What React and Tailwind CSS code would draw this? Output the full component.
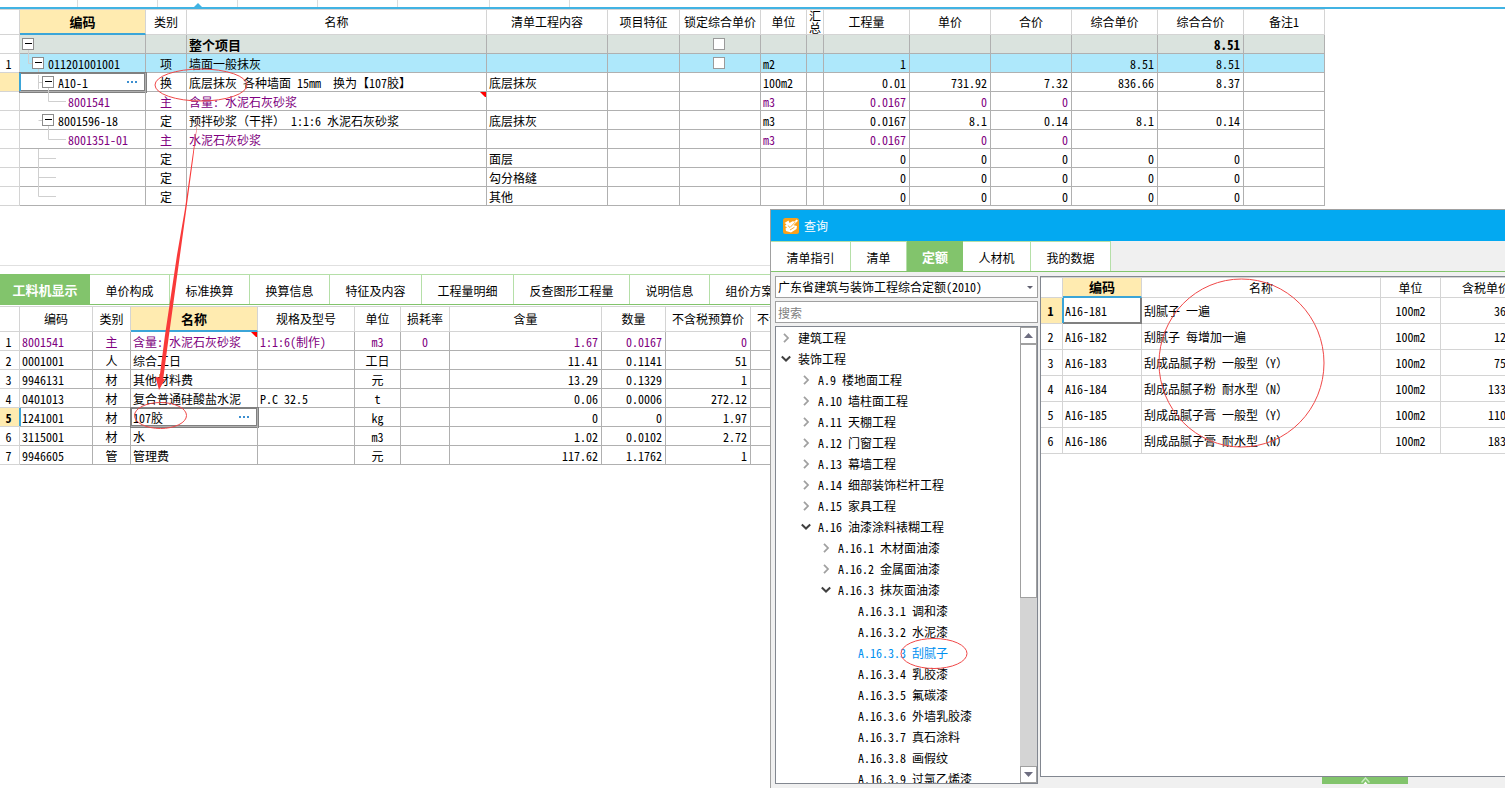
import React from "react";

const FONT = "font-['Noto_Sans_Mono_CJK_SC','Noto_Sans_CJK_SC','Liberation_Mono',monospace]";

const A_COLS = [
  ["", "w-[20px]"], ["编码", "w-[126px]"], ["类别", "w-[41px]"], ["名称", "w-[300px]"],
  ["清单工程内容", "w-[121px]"], ["项目特征", "w-[72px]"], ["锁定综合单价", "w-[81px]"],
  ["单位", "w-[46px]"], ["汇总", "w-[17px]"], ["工程量", "w-[86px]"], ["单价", "w-[81px]"],
  ["合价", "w-[81px]"], ["综合单价", "w-[86px]"], ["综合合价", "w-[86px]"], ["备注1", "w-[81px]"],
];

const A_ROWS = [
  { tree: "root", kind: "", name: "整个项目", check: true, tone: "summary", v: ["", "", "", "", "8.51"] },
  { no: "1", tree: "l1", code: "011201001001", kind: "项", name: "墙面一般抹灰", check: true, tone: "item", unit: "m2", v: ["1", "", "", "8.51", "8.51"] },
  { tree: "l2", code: "A10-1", kind: "换", name: "底层抹灰 各种墙面 15mm  换为【107胶】", content: "底层抹灰", unit: "100m2", v: ["0.01", "731.92", "7.32", "836.66", "8.37"], selected: true },
  { tree: "l3", code: "8001541", kind: "主", name: "含量: 水泥石灰砂浆", unit: "m3", v: ["0.0167", "0", "0", "", ""], tone: "main", flag: true },
  { tree: "l2b", code: "8001596-18", kind: "定", name: "预拌砂浆（干拌） 1:1:6 水泥石灰砂浆", content: "底层抹灰", unit: "m3", v: ["0.0167", "8.1", "0.14", "8.1", "0.14"] },
  { tree: "l3", code: "8001351-01", kind: "主", name: "水泥石灰砂浆", unit: "m3", v: ["0.0167", "0", "0", "", ""], tone: "main" },
  { tree: "mid", kind: "定", content: "面层", v: ["0", "0", "0", "0", "0"] },
  { tree: "mid", kind: "定", content: "勾分格缝", v: ["0", "0", "0", "0", "0"] },
  { tree: "end", kind: "定", content: "其他", v: ["0", "0", "0", "0", "0"] },
];

const BRANCH = {
  root: { d: "M8.5 15V19", box: 2, pad: "pl-[18px]" },
  l1: { d: "M8.5 0V9.5H12M18.5 15V19", box: 12, pad: "pl-[28px]" },
  l2: { d: "M18.5 2V16M18.5 9.5H22M28.5 15V19", box: 22, pad: "pl-[38px]" },
  l2b: { d: "M18.5 9.5H22M28.5 15V19", box: 22, pad: "pl-[38px]" },
  l3: { d: "M28.5 0V9.5H46", pad: "pl-[48px]" },
  mid: { d: "M18.5 0V19M18.5 9.5H36", pad: "" },
  end: { d: "M18.5 0V9.5H36", pad: "" },
};

const B_COLS = [
  ["", "w-[20px]"], ["编码", "w-[73px]"], ["类别", "w-[38px]"], ["名称", "w-[127px]"],
  ["规格及型号", "w-[97px]"], ["单位", "w-[46px]"], ["损耗率", "w-[49px]"], ["含量", "w-[152px]"],
  ["数量", "w-[64px]"], ["不含税预算价", "w-[85px]"], ["不含税市场价", "w-[85px]"],
];

const B_ROWS = [
  ["8001541", "主", "含量: 水泥石灰砂浆", "1:1:6(制作)", "m3", "0", "1.67", "0.0167", "0"],
  ["0001001", "人", "综合工日", "", "工日", "", "11.41", "0.1141", "51"],
  ["9946131", "材", "其他材料费", "", "元", "", "13.29", "0.1329", "1"],
  ["0401013", "材", "复合普通硅酸盐水泥", "P.C 32.5", "t", "", "0.06", "0.0006", "272.12"],
  ["1241001", "材", "107胶", "", "kg", "", "0", "0", "1.97"],
  ["3115001", "材", "水", "", "m3", "", "1.02", "0.0102", "2.72"],
  ["9946605", "管", "管理费", "", "元", "", "117.62", "1.1762", "1"],
];

const B_TABS = [
  ["工料机显示", "w-[90px]"], ["单价构成", "w-[80px]"], ["标准换算", "w-[80px]"], ["换算信息", "w-[80px]"],
  ["特征及内容", "w-[92px]"], ["工程量明细", "w-[92px]"], ["反查图形工程量", "w-[116px]"],
  ["说明信息", "w-[80px]"], ["组价方案", "w-[80px]"],
];

const Q_TABS = [
  ["清单指引", "w-[80px]"], ["清单", "w-[56px]"], ["定额", "w-[56px]"], ["人材机", "w-[68px]"], ["我的数据", "w-[80px]"],
];

const TREE = [
  [0, ">", "建筑工程"], [0, "v", "装饰工程"], [1, ">", "A.9 楼地面工程"], [1, ">", "A.10 墙柱面工程"],
  [1, ">", "A.11 天棚工程"], [1, ">", "A.12 门窗工程"], [1, ">", "A.13 幕墙工程"],
  [1, ">", "A.14 细部装饰栏杆工程"], [1, ">", "A.15 家具工程"], [1, "v", "A.16 油漆涂料裱糊工程"],
  [2, ">", "A.16.1 木材面油漆"], [2, ">", "A.16.2 金属面油漆"], [2, "v", "A.16.3 抹灰面油漆"],
  [3, "", "A.16.3.1 调和漆"], [3, "", "A.16.3.2 水泥漆"], [3, "", "A.16.3.3 刮腻子"],
  [3, "", "A.16.3.4 乳胶漆"], [3, "", "A.16.3.5 氟碳漆"], [3, "", "A.16.3.6 外墙乳胶漆"],
  [3, "", "A.16.3.7 真石涂料"], [3, "", "A.16.3.8 画假纹"], [3, "", "A.16.3.9 过氯乙烯漆"],
];
const INDENT = ["pl-[4px]", "pl-[24px]", "pl-[44px]", "pl-[64px]"];

const Q_ROWS = [
  ["A16-181", "刮腻子 一遍", "100m2", "36"], ["A16-182", "刮腻子 每增加一遍", "100m2", "12"],
  ["A16-183", "刮成品腻子粉 一般型（Y）", "100m2", "75"], ["A16-184", "刮成品腻子粉 耐水型（N）", "100m2", "133"],
  ["A16-185", "刮成品腻子膏 一般型（Y）", "100m2", "110"], ["A16-186", "刮成品腻子膏 耐水型（N）", "100m2", "183"],
];

const GRID = "table-fixed border-separate border-spacing-0";
const HEAD = "h-[25px] border-b border-r border-[#d4d4d4] bg-white p-0 font-normal";
const ACTIVE_HEAD = "border-b-2 border-r border-b-[#3ba5d8] border-r-[#d4d4d4] bg-[#ffebb0] p-0 text-[13px] font-bold";
const CELL = "h-[19px] border-b border-r border-[#b0b0b0] pb-0 pt-0.5 leading-4";
const PLAIN_CELL = "h-[19px] border-b border-r border-[#b0b0b0] p-0 leading-4";
const NO_CELL = "h-[19px] border-b border-r border-[#d4d4d4] pb-0 pr-0.5 pt-0.5 text-center leading-4";
const SELECTED = "shadow-[inset_0_0_0_1px_#808080,0_0_0_1px_#808080]";

function Branch({ type }) {
  const b = BRANCH[type];
  return (
    <svg className="absolute left-0 top-0" width="50" height="19" aria-hidden="true">
      <path d={b.d} stroke="#cfcfcf" fill="none" />
      {b.box !== undefined && (
        <>
          <rect x={b.box + 0.5} y="3.5" width="11" height="11" fill="#fff" stroke="#8c8c8c" />
          <path d={`M${b.box + 3} 8.5h7`} stroke="#000" />
        </>
      )}
    </svg>
  );
}

function Flag() {
  return (
    <svg className="absolute right-0 top-0" width="6" height="5" aria-hidden="true">
      <path d="M0 0H6V5H5Z" fill="#f00" />
    </svg>
  );
}

function More() {
  return (
    <button type="button" aria-label="更多" className="absolute right-2 top-2 flex gap-[2px]">
      <i className="size-[2px] bg-[#3c8fd0]" />
      <i className="size-[2px] bg-[#3c8fd0]" />
      <i className="size-[2px] bg-[#3c8fd0]" />
    </button>
  );
}

function BillTable() {
  return (
    <table className={`${GRID} w-[1325px] border-t border-[#d4d4d4]`}>
      <colgroup>{A_COLS.map(([n, w], i) => <col key={i} className={w} />)}</colgroup>
      <thead>
        <tr>
          {A_COLS.map(([n], i) => (
            <th key={i} className={i === 1 ? ACTIVE_HEAD : HEAD}>
              {n === "汇总" ? (
                <div className="mx-auto w-3 leading-[12px]">{n}</div>
              ) : (
                <div className="whitespace-nowrap">{n}</div>
              )}
            </th>
          ))}
        </tr>
      </thead>
      <tbody>
        {A_ROWS.map((r, i) => {
          const bg = r.tone === "summary" ? "bg-[#dae3de] font-bold" : r.tone === "item" ? "bg-[#aee8fb]" : r.tone === "main" ? "text-[#800080]" : "";
          const big = r.tone === "summary" ? "text-[13px]" : "";
          return (
            <tr key={i} className={bg}>
              <td className={`${NO_CELL} ${r.selected ? "bg-[#ffebb0]" : "bg-white"}`}>{r.no}</td>
              <td className={`${CELL} relative ${r.selected ? SELECTED : ""}`}>
                <Branch type={r.tree} />
                {r.selected && <i className="absolute -left-px top-0 h-[18px] w-[2px] bg-[#3ba5d8]" />}
                <div className={BRANCH[r.tree].pad}>{r.code}</div>
                {r.selected && <More />}
              </td>
              <td className={`${CELL} text-center`}>{r.kind}</td>
              <td className={`${CELL} relative whitespace-pre pl-0.5 ${big}`}>{r.name}{r.flag && <Flag />}</td>
              <td className={`${CELL} pl-0.5`}>{r.content}</td>
              <td className={CELL} />
              <td className={PLAIN_CELL}>
                {r.check && (
                  <div className="flex justify-center pr-0.5">
                    <input type="checkbox" aria-label="锁定综合单价" className="size-3 appearance-none border border-[#9a9a9a] bg-white" />
                  </div>
                )}
              </td>
              <td className={`${CELL} pl-0.5`}>{r.unit}</td>
              <td className={CELL} />
              {r.v.map((v, k) => <td key={k} className={`${CELL} pr-[3px] text-right ${big}`}>{v}</td>)}
              <td className={CELL} />
            </tr>
          );
        })}
      </tbody>
    </table>
  );
}

function MaterialTable() {
  return (
    <table className={`${GRID} w-[836px] border-t border-[#d4d4d4]`}>
      <colgroup>{B_COLS.map(([n, w], i) => <col key={i} className={w} />)}</colgroup>
      <thead>
        <tr>
          {B_COLS.map(([n], i) => <th key={i} className={`${i === 3 ? ACTIVE_HEAD : HEAD} whitespace-nowrap`}>{n}</th>)}
        </tr>
      </thead>
      <tbody>
        {B_ROWS.map((r, i) => {
          const sel = i === 4;
          return (
            <tr key={i} className={i === 0 ? "text-[#800080]" : ""}>
              <td className={`${NO_CELL} text-black ${sel ? "bg-[#ffebb0] font-bold" : ""}`}>{i + 1}</td>
              <td className={`${CELL} relative pl-0.5`}>
                {sel && <i className="absolute -left-px top-0 h-[18px] w-[2px] bg-[#3ba5d8]" />}
                {r[0]}
              </td>
              <td className={`${CELL} text-center`}>{r[1]}</td>
              <td className={`${CELL} relative whitespace-nowrap pl-0.5 ${sel ? SELECTED : ""}`}>
                {r[2]}
                {i === 0 && <Flag />}
                {sel && <More />}
              </td>
              <td className={`${CELL} whitespace-nowrap pl-0.5`}>{r[3]}</td>
              <td className={`${CELL} text-center`}>{r[4]}</td>
              <td className={`${CELL} text-center`}>{r[5]}</td>
              <td className={`${CELL} pr-[3px] text-right`}>{r[6]}</td>
              <td className={`${CELL} pr-[3px] text-right`}>{r[7]}</td>
              <td className={`${CELL} pr-[3px] text-right`}>{r[8]}</td>
              <td className={CELL} />
            </tr>
          );
        })}
      </tbody>
    </table>
  );
}

function Tabs({ items, active, label }) {
  return (
    <div role="tablist" aria-label={label} className="flex h-[31px] shrink-0 border-b border-[#82c46c]">
      {items.map(([n, w], i) => (
        <button
          key={n}
          type="button"
          role="tab"
          aria-selected={i === active}
          className={`${w} shrink-0 whitespace-nowrap pt-0.5 ${i === active ? "bg-[#82c46c] text-[13px] font-bold text-white" : "border-r border-t border-[#b5dfa8] bg-white"}`}
        >
          {n}
        </button>
      ))}
    </div>
  );
}

function Chevron({ dir }) {
  return (
    <svg width="12" height="12" viewBox="0 0 12 12" fill="none" aria-hidden="true">
      {dir === ">" && <path d="M4 1.8L8 6L4 10.2" stroke="#a0a0a0" strokeWidth="1.8" />}
      {dir === "v" && <path d="M1.8 3.5L6 7.5L10.2 3.5" stroke="#404040" strokeWidth="2" />}
    </svg>
  );
}

function Logo() {
  return (
    <svg width="16" height="16" viewBox="0 0 16 16" aria-hidden="true">
      <rect width="16" height="16" rx="2.5" fill="#f9a11b" />
      <path d="M1.5 5L5.5 2.5L6.5 5L9.5 3.2L11.5 3.5L13.5 1.5L15 2.8L10.5 7.2L14 8L13.5 11L8 14.5L3 13L2.5 10.5L4 9.2L1.8 8L3.5 6.2Z" fill="#fff" />
      <path d="M12.5 3.8L7 9.5L4.8 7.5M7 12L11.5 9.2" stroke="#f9a11b" strokeWidth="0.9" fill="none" />
    </svg>
  );
}

function ScrollButton({ down }) {
  return (
    <button type="button" aria-label={down ? "向下滚动" : "向上滚动"} className="flex h-[17px] shrink-0 items-center justify-center border border-[#a0a0a0] bg-white">
      <svg width="9" height="5" aria-hidden="true"><path d={down ? "M0 0H9L4.5 5Z" : "M0 5H9L4.5 0Z"} fill="#6d6d80" /></svg>
    </button>
  );
}

function QueryWindow() {
  return (
    <section aria-label="查询" className="absolute bottom-0 left-[770px] right-0 top-[209px] flex flex-col overflow-hidden border-l border-t border-[#a0a0a0] bg-[#f0f0f0]">
      <header className="flex h-[31px] shrink-0 items-center gap-[5px] bg-[#03a9f1] pl-3 text-white">
        <Logo />
        <h1>查询</h1>
      </header>
      <Tabs items={Q_TABS} active={2} label="查询分类" />
      <div className="flex min-h-0 flex-1 gap-0.5 pl-1 pt-1">
        <div className="mb-1 flex w-[263px] shrink-0 flex-col gap-[3px]">
          <div className="relative">
            <select aria-label="定额库" className="block h-[22px] w-full appearance-none border border-[#a0a0a0] bg-white pl-0.5">
              <option>广东省建筑与装饰工程综合定额(2010)</option>
            </select>
            <svg className="pointer-events-none absolute right-[5px] top-[10px]" width="6" height="3" aria-hidden="true"><path d="M0 0H6L3 3Z" fill="#606070" /></svg>
          </div>
          <input aria-label="搜索" placeholder="搜索" className="h-[22px] w-full border border-[#a0a0a0] bg-white pl-0.5 placeholder:text-[#808080]" />
          <div className="flex min-h-0 flex-1 border border-[#828790] bg-white">
            <ul className="min-w-0 flex-1 overflow-hidden">
              {TREE.map(([lvl, dir, text]) => (
                <li key={text} className={`flex h-[21px] items-center gap-[6px] whitespace-nowrap ${INDENT[lvl]} ${text.endsWith("刮腻子") ? "text-[#0090f0]" : ""}`}>
                  <Chevron dir={dir} />
                  {text}
                </li>
              ))}
            </ul>
            <div className="flex w-[17px] shrink-0 flex-col bg-[#d4d4d4]">
              <ScrollButton />
              <div className="h-[254px] border border-[#a0a0a0] bg-white" />
              <div className="flex-1" />
              <ScrollButton down />
            </div>
          </div>
        </div>
        <div className="flex min-w-0 flex-1 flex-col">
          <div className="min-h-0 flex-1 overflow-hidden border-b border-l border-t border-[#828790] bg-white">
            <table className={`${GRID} w-[491px] border-t border-[#d4d4d4]`}>
              <colgroup>
                <col className="w-[22px]" /><col className="w-[79px]" /><col className="w-[239px]" /><col className="w-[60px]" /><col className="w-[91px]" />
              </colgroup>
              <thead>
                <tr className="h-5">
                  {["", "编码", "名称", "单位", "含税单价"].map((h, i) => (
                    <th key={i} className={i === 1 ? ACTIVE_HEAD : "border-b border-r border-[#d4d4d4] p-0 font-normal"}>{h}</th>
                  ))}
                </tr>
              </thead>
              <tbody>
                {Q_ROWS.map((r, i) => (
                  <tr key={r[0]} className="h-[26px]">
                    <td className={`border-b border-r border-[#d4d4d4] p-0 pr-0.5 text-center ${i === 0 ? "bg-[#ffebb0] font-bold" : ""}`}>{i + 1}</td>
                    <td className={`relative border-b border-r p-0 pl-0.5 ${i === 0 ? "border-[#808080] shadow-[inset_-1px_-1px_0_0_#808080]" : "border-[#d4d4d4]"}`}>
                      {i === 0 && <i className="absolute -left-px top-0 h-[25px] w-[2px] bg-[#3ba5d8]" />}
                      {r[0]}
                    </td>
                    <td className="border-b border-r border-[#d4d4d4] p-0 pl-0.5">{r[1]}</td>
                    <td className="border-b border-r border-[#d4d4d4] p-0 text-center">{r[2]}</td>
                    <td className="border-b border-r border-[#d4d4d4] p-0 pr-[25px] text-right">{r[3]}</td>
                  </tr>
                ))}
              </tbody>
            </table>
          </div>
          <div className="flex h-[11px] shrink-0 pl-[282px]">
            <button type="button" aria-label="展开" className="flex h-[7px] w-[86px] items-center justify-center bg-[#82c46c]">
              <svg width="9" height="7" aria-hidden="true"><path d="M0.5 5.5L4.5 1L8.5 5.5" fill="none" stroke="#c8ecc0" strokeWidth="1.5" /><path d="M2.5 7L4.5 4.5L6.5 7Z" fill="#fff" /></svg>
            </button>
          </div>
        </div>
      </div>
    </section>
  );
}

function Marks() {
  return (
    <svg className="pointer-events-none absolute left-0 top-0" width="1505" height="788" aria-hidden="true">
      <g fill="none" stroke="#f04848" strokeWidth="1">
        <ellipse cx="201" cy="85" rx="46" ry="16" />
        <ellipse cx="160.500" cy="415.500" rx="26" ry="13" />
        <ellipse cx="934" cy="653.500" rx="33" ry="15" />
        <ellipse cx="1241.500" cy="363" rx="82.500" ry="84" />
      </g>
      <path d="M199 111L193.200 158L186.200 210L180 255L169 335L163.200 379H165L159 390L155.500 377L159.500 377.500L165 335L177 255L184.800 210L192.200 158Z" fill="#f93a3a" />
    </svg>
  );
}

export default function App() {
  return (
    <div className={`${FONT} relative min-h-screen overflow-hidden bg-white text-[12px] leading-[18px] text-black`}>
      <div className="flex h-[9px] border-b-2 border-[#41b3e3]">
        <i className="w-[78px] border-r border-[#dcdcdc]" />
        <i className="w-[80px] border-r border-[#dcdcdc]" />
        <i className="flex w-[80px] items-end justify-center border-r border-[#dcdcdc]">
          <svg width="8" height="4" aria-hidden="true"><path d="M0 4L4 0L8 4Z" fill="#41b3e3" /></svg>
        </i>
        <i className="w-[80px] border-r border-[#dcdcdc]" />
        <i className="w-[80px] border-r border-[#dcdcdc]" />
        <i className="w-[92px] border-r border-[#dcdcdc]" />
        <i className="w-[80px] border-r border-[#dcdcdc]" />
      </div>
      <BillTable />
      <div className="mt-[59px] border-t border-[#e0e0e0] pt-2">
        <Tabs items={B_TABS} active={0} label="明细" />
        <div className="pt-px">
          <MaterialTable />
        </div>
      </div>
      <QueryWindow />
      <Marks />
    </div>
  );
}
